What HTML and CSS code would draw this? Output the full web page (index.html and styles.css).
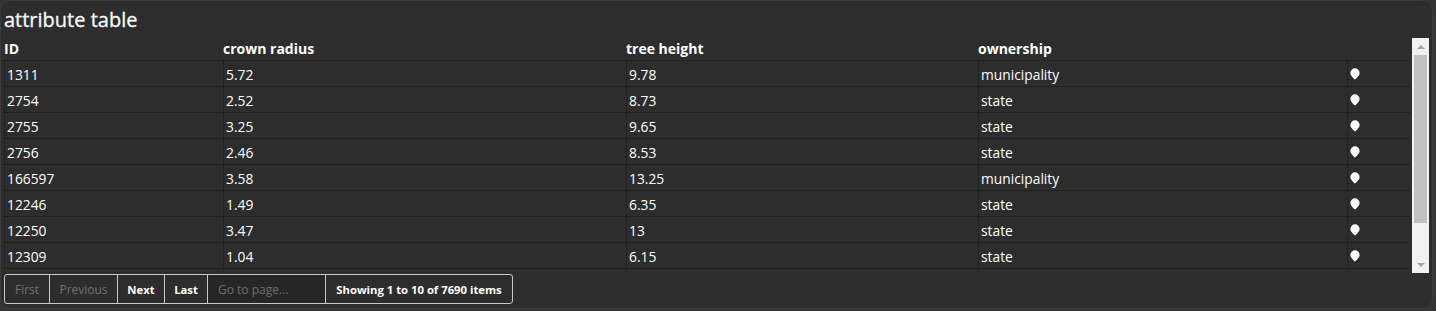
FILE: index.html
```html
<!DOCTYPE html>
<html lang="en">
<head>
<meta charset="utf-8">
<title>attribute table</title>
<link rel="stylesheet" href="styles.css">
</head>
<body>
<div class="panel">
  <h1 class="title">attribute table</h1>
  <div class="table-wrap">
    <div class="grid">
      <div class="row head">
        <div class="cell">ID</div>
        <div class="cell">crown radius</div>
        <div class="cell">tree height</div>
        <div class="cell">ownership</div>
        <div class="cell"></div>
      </div>
      <div class="row"><div class="cell">1311</div><div class="cell">5.72</div><div class="cell">9.78</div><div class="cell">municipality</div><div class="cell pin-cell"><svg class="pin" viewBox="0 0 10 12"><path d="M5 11.6C3.3 9.4 0.4 7.8 0.4 4.9A4.6 4.6 0 0 1 9.6 4.9C9.6 7.8 6.7 9.4 5 11.6Z"/></svg></div></div>
      <div class="row"><div class="cell">2754</div><div class="cell">2.52</div><div class="cell">8.73</div><div class="cell">state</div><div class="cell pin-cell"><svg class="pin" viewBox="0 0 10 12"><path d="M5 11.6C3.3 9.4 0.4 7.8 0.4 4.9A4.6 4.6 0 0 1 9.6 4.9C9.6 7.8 6.7 9.4 5 11.6Z"/></svg></div></div>
      <div class="row"><div class="cell">2755</div><div class="cell">3.25</div><div class="cell">9.65</div><div class="cell">state</div><div class="cell pin-cell"><svg class="pin" viewBox="0 0 10 12"><path d="M5 11.6C3.3 9.4 0.4 7.8 0.4 4.9A4.6 4.6 0 0 1 9.6 4.9C9.6 7.8 6.7 9.4 5 11.6Z"/></svg></div></div>
      <div class="row"><div class="cell">2756</div><div class="cell">2.46</div><div class="cell">8.53</div><div class="cell">state</div><div class="cell pin-cell"><svg class="pin" viewBox="0 0 10 12"><path d="M5 11.6C3.3 9.4 0.4 7.8 0.4 4.9A4.6 4.6 0 0 1 9.6 4.9C9.6 7.8 6.7 9.4 5 11.6Z"/></svg></div></div>
      <div class="row"><div class="cell">166597</div><div class="cell">3.58</div><div class="cell">13.25</div><div class="cell">municipality</div><div class="cell pin-cell"><svg class="pin" viewBox="0 0 10 12"><path d="M5 11.6C3.3 9.4 0.4 7.8 0.4 4.9A4.6 4.6 0 0 1 9.6 4.9C9.6 7.8 6.7 9.4 5 11.6Z"/></svg></div></div>
      <div class="row"><div class="cell">12246</div><div class="cell">1.49</div><div class="cell">6.35</div><div class="cell">state</div><div class="cell pin-cell"><svg class="pin" viewBox="0 0 10 12"><path d="M5 11.6C3.3 9.4 0.4 7.8 0.4 4.9A4.6 4.6 0 0 1 9.6 4.9C9.6 7.8 6.7 9.4 5 11.6Z"/></svg></div></div>
      <div class="row"><div class="cell">12250</div><div class="cell">3.47</div><div class="cell">13</div><div class="cell">state</div><div class="cell pin-cell"><svg class="pin" viewBox="0 0 10 12"><path d="M5 11.6C3.3 9.4 0.4 7.8 0.4 4.9A4.6 4.6 0 0 1 9.6 4.9C9.6 7.8 6.7 9.4 5 11.6Z"/></svg></div></div>
      <div class="row"><div class="cell">12309</div><div class="cell">1.04</div><div class="cell">6.15</div><div class="cell">state</div><div class="cell pin-cell"><svg class="pin" viewBox="0 0 10 12"><path d="M5 11.6C3.3 9.4 0.4 7.8 0.4 4.9A4.6 4.6 0 0 1 9.6 4.9C9.6 7.8 6.7 9.4 5 11.6Z"/></svg></div></div>
    </div>
    <div class="scrollbar">
      <div class="sb-btn"><span class="tri up"></span></div>
      <div class="sb-track"><div class="sb-thumb"></div></div>
      <div class="sb-btn"><span class="tri down"></span></div>
    </div>
  </div>
  <div class="pager">
    <span class="pg pg-first disabled">First</span>
    <span class="pg pg-prev disabled">Previous</span>
    <span class="pg pg-next">Next</span>
    <span class="pg pg-last">Last</span>
    <input class="pg pg-input" type="text" placeholder="Go to page...">
    <span class="pg pg-info">Showing 1 to 10 of 7690 items</span>
  </div>
</div>
</body>
</html>
```
FILE: styles.css
```css
html, body {
  margin: 0;
  padding: 0;
  background: #353535;
}
body {
  font-family: "Open Sans", "DejaVu Sans", sans-serif;
  color: #fff;
}
.panel {
  box-sizing: border-box;
  width: 1433px;
  height: 309px;
  background: #2d2d2d;
  border: 1px solid #3b3b3b;
  border-radius: 10px;
  padding: 0 0 0 3px;
  display: flex;
  flex-direction: column;
}
.title {
  margin: 0;
  padding: 7px 0 6px 0;
  font-size: 20px;
  line-height: 24px;
  font-weight: normal;
  color: #fafafa;
  -webkit-text-stroke: 0.3px #fafafa;
}
.table-wrap {
  display: flex;
  align-items: flex-start;
  gap: 2px;
  height: 235px;
}
.grid {
  width: 1406px;
}
.row {
  display: grid;
  grid-template-columns: 219px 403px 352px 369px 63px;
  height: 26px;
  box-sizing: border-box;
  border-bottom: 1px solid #1f1f1f;
  font-size: 13.8px;
}
.row .cell {
  border-left: 1px dotted #181818;
  padding: 1px 0 0 2px;
  display: flex;
  align-items: center;
  white-space: nowrap;
}
.row .pin-cell {
  padding-top: 0;
}
.row.head {
  height: 23px;
  border-bottom: 1px dotted #181818;
  font-weight: bold;
  font-size: 14px;
}
.row.head .cell {
  border-left: none;
  padding: 0 0 2px 0;
}
.pin {
  width: 10px;
  height: 12px;
  fill: #fff;
}
.scrollbar {
  width: 17px;
  height: 235px;
  background: #f1f1f1;
  display: flex;
  flex-direction: column;
}
.sb-btn {
  height: 17px;
  display: flex;
  align-items: center;
  justify-content: center;
}
.tri {
  width: 0;
  height: 0;
  border-left: 4px solid transparent;
  border-right: 4px solid transparent;
}
.tri.up { border-bottom: 4px solid #a3a3a3; }
.tri.down { border-top: 4px solid #a3a3a3; }
.sb-track {
  flex: 1;
  padding: 0 2px;
}
.sb-thumb {
  height: 168px;
  background: #c1c1c1;
}
.pager {
  margin-top: 1px;
  align-self: flex-start;
  display: flex;
  height: 30px;
  box-sizing: border-box;
  border: 1px solid #c9c9c9;
  border-radius: 3px;
  overflow: hidden;
  font-size: 11.3px;
}
.pg {
  box-sizing: border-box;
  display: flex;
  align-items: center;
  justify-content: center;
  border-left: 1px solid #c9c9c9;
  font-weight: bold;
  color: #fff;
  font-family: inherit;
}
.pg-first { border-left: none; width: 44px; }
.pg-prev { width: 68px; }
.pg-next { width: 47px; }
.pg-last { width: 43px; }
.pg.disabled { color: #707070; font-weight: normal; font-size: 12px; }
.pg-input {
  width: 118px;
  height: 28px;
  margin: 0;
  padding: 0 0 0 10px;
  border: none;
  border-left: 1px solid #c9c9c9;
  background: #262626;
  font-size: 12px;
  font-weight: normal;
  outline: none;
}
.pg-input::placeholder { color: #6e6e6e; }
.pg-info { width: 187px; }
```
